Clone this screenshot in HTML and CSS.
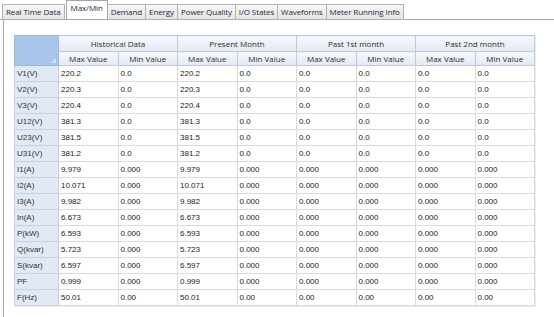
FILE: index.html
```html
<!DOCTYPE html>
<html lang="en">
<head>
    <meta charset="UTF-8">
    <title>Max/Min</title>
    <link rel="stylesheet" href="styles.css">
</head>
<body>
    <nav class="tabs">
        <div class="tab">Real Time Data</div>
        <div class="tab active">Max/Min</div>
        <div class="tab">Demand</div>
        <div class="tab">Energy</div>
        <div class="tab">Power Quality</div>
        <div class="tab">I/O States</div>
        <div class="tab">Waveforms</div>
        <div class="tab">Meter Running Info</div>
    </nav>
    <section class="panel">
        <table class="grid">
            <colgroup>
                <col class="col-label">
                <col><col><col><col><col><col><col><col>
            </colgroup>
            <thead>
                <tr>
                    <th class="corner" rowspan="2"></th>
                    <th colspan="2">Historical Data</th>
                    <th colspan="2">Present Month</th>
                    <th colspan="2">Past 1st month</th>
                    <th colspan="2">Past 2nd month</th>
                </tr>
                <tr class="sub">
                    <th>Max Value</th><th>Min Value</th>
                    <th>Max Value</th><th>Min Value</th>
                    <th>Max Value</th><th>Min Value</th>
                    <th>Max Value</th><th>Min Value</th>
                </tr>
            </thead>
            <tbody id="gridBody"></tbody>
        </table>
    </section>
    <script>
        const rows = [
            ['V1(V)', '220.2', '0.0', '220.2', '0.0', '0.0', '0.0', '0.0', '0.0'],
            ['V2(V)', '220.3', '0.0', '220.3', '0.0', '0.0', '0.0', '0.0', '0.0'],
            ['V3(V)', '220.4', '0.0', '220.4', '0.0', '0.0', '0.0', '0.0', '0.0'],
            ['U12(V)', '381.3', '0.0', '381.3', '0.0', '0.0', '0.0', '0.0', '0.0'],
            ['U23(V)', '381.5', '0.0', '381.5', '0.0', '0.0', '0.0', '0.0', '0.0'],
            ['U31(V)', '381.2', '0.0', '381.2', '0.0', '0.0', '0.0', '0.0', '0.0'],
            ['I1(A)', '9.979', '0.000', '9.979', '0.000', '0.000', '0.000', '0.000', '0.000'],
            ['I2(A)', '10.071', '0.000', '10.071', '0.000', '0.000', '0.000', '0.000', '0.000'],
            ['I3(A)', '9.982', '0.000', '9.982', '0.000', '0.000', '0.000', '0.000', '0.000'],
            ['In(A)', '6.673', '0.000', '6.673', '0.000', '0.000', '0.000', '0.000', '0.000'],
            ['P(kW)', '6.593', '0.000', '6.593', '0.000', '0.000', '0.000', '0.000', '0.000'],
            ['Q(kvar)', '5.723', '0.000', '5.723', '0.000', '0.000', '0.000', '0.000', '0.000'],
            ['S(kvar)', '6.597', '0.000', '6.597', '0.000', '0.000', '0.000', '0.000', '0.000'],
            ['PF', '0.999', '0.000', '0.999', '0.000', '0.000', '0.000', '0.000', '0.000'],
            ['F(Hz)', '50.01', '0.00', '50.01', '0.00', '0.00', '0.00', '0.00', '0.00']
        ];

        const body = document.getElementById('gridBody');
        rows.forEach(values => {
            const row = document.createElement('tr');
            values.forEach((value, index) => {
                const cell = document.createElement(index === 0 ? 'th' : 'td');
                cell.innerText = value;
                row.appendChild(cell);
            });
            body.appendChild(row);
        });
    </script>
</body>
</html>
```
FILE: styles.css
```css
body {
    margin: 0;
    padding: 0;
    background-color: #ffffff;
    font-family: "Open Sans", "DejaVu Sans", sans-serif;
    overflow: hidden;
}
.tabs {
    display: flex;
    align-items: flex-end;
    height: 19px;
    padding-left: 2px;
    border-bottom: 1px solid #a7a7a7;
}
.tab {
    height: 14px;
    line-height: 13px;
    padding: 0 3px;
    margin-bottom: -1px;
    font-size: 8px;
    letter-spacing: -0.1px;
    color: #1c2a3c;
    background: linear-gradient(#f7f7f7, #e4e4e4);
    border: 1px solid #b1b1b1;
    border-left: none;
    white-space: nowrap;
}
.tab:first-child {
    border-left: 1px solid #b1b1b1;
}
.tab.active {
    height: 18px;
    line-height: 14px;
    padding: 0 4px;
    background: #ffffff;
    border-bottom: 1px solid #ffffff;
    border-color: #a7a7a7;
    border-left: 1px solid #a7a7a7;
    margin-left: 1px;
}
.panel {
    height: 282px;
    margin-left: 3px;
    border-left: 1px solid #a7a7a7;
    padding: 15px 0 0 10px;
}
.grid {
    width: 521px;
    border-collapse: collapse;
    table-layout: fixed;
    font-family: "Liberation Sans", Arial, sans-serif;
    font-size: 8px;
    color: #222222;
    border: 1px solid #c9c9c9;
    box-shadow: 1px 1px 0 #ececec;
}
.col-label {
    width: 44px;
}
.grid thead th {
    height: 15px;
    padding: 0;
    font-family: "Open Sans", "DejaVu Sans", sans-serif;
    font-size: 8px;
    font-weight: normal;
    color: #2a2a2a;
    text-align: center;
    background: linear-gradient(#f6f9fd, #e2e9f3);
    border: 1px solid #bccbdd;
}
.grid thead .sub th {
    height: 13px;
}
.grid thead th.corner {
    position: relative;
    background: #a9c5ea;
    border-color: #9fb6d4;
}
.corner::after {
    content: "";
    position: absolute;
    right: 2px;
    bottom: 2px;
    border-left: 5px solid transparent;
    border-bottom: 5px solid #d5e2f3;
}
.grid tbody th,
.grid tbody td {
    height: 15px;
    padding: 0 0 0 2px;
    text-align: left;
    font-weight: normal;
    white-space: nowrap;
}
.grid tbody th {
    background-color: #e1e9f5;
    border: 1px solid #c4d2e5;
    color: #2c3440;
}
.grid tbody td {
    border: 1px solid #dadada;
}
```
